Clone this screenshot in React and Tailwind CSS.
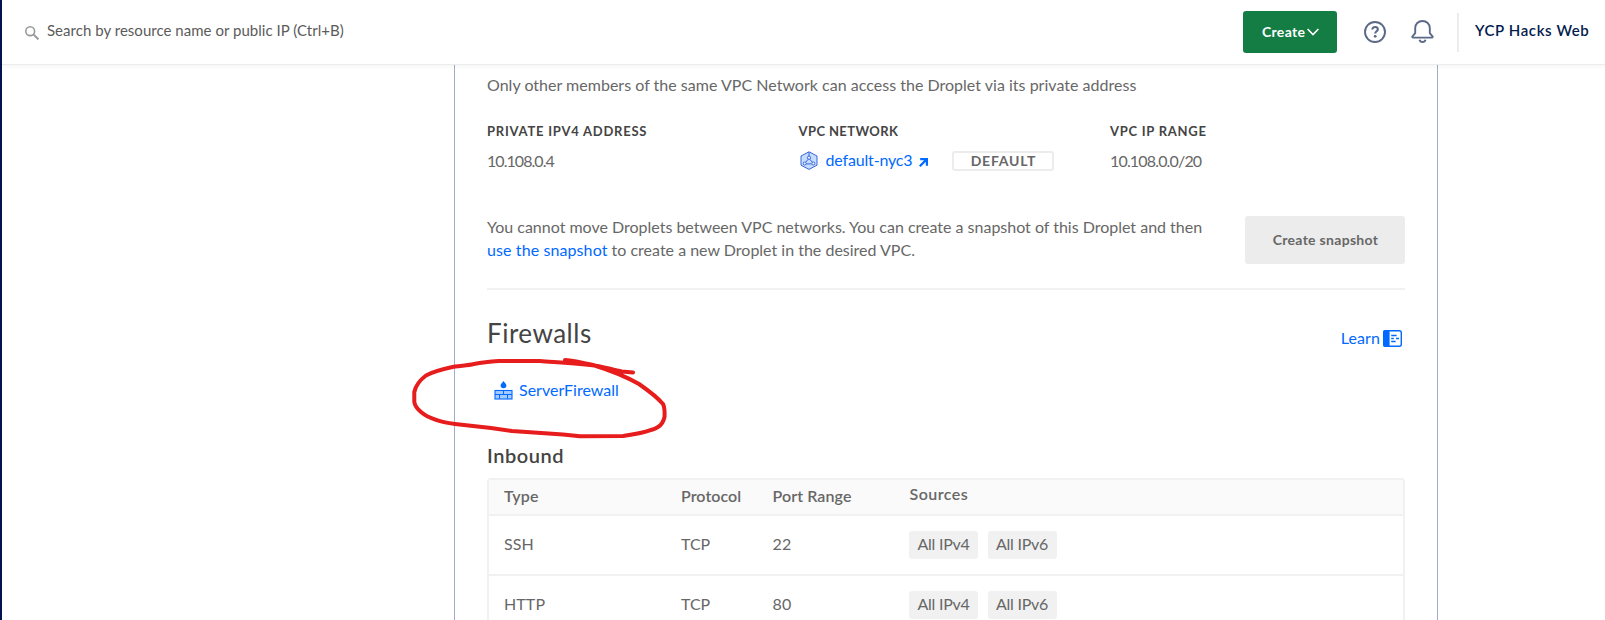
function SearchIcon() {
  return (
    <svg className="mt-px ml-[23px] size-[14px] shrink-0" viewBox="0 0 14 14" fill="none" stroke="#999999">
      <circle cx="5.2" cy="5.2" r="4.4" strokeWidth="1.6" />
      <path d="M8.4 8.4 13.4 13.4" strokeWidth="2" />
    </svg>
  );
}

function HelpIcon() {
  return (
    <svg className="size-[22px]" viewBox="0 0 22 22" fill="none" stroke="#5b6987" strokeWidth="1.9">
      <circle cx="11" cy="11" r="10" />
      <path d="M8.3 8.6c0-1.6 1.1-2.6 2.8-2.6s2.7 1 2.7 2.4c0 1.9-2.6 1.9-2.6 4.1" strokeWidth="2.1" />
      <circle cx="11.2" cy="15.3" r="1.4" fill="#5b6987" stroke="none" />
    </svg>
  );
}

function BellIcon() {
  return (
    <svg className="size-[23px]" viewBox="0 0 23 23" fill="none" stroke="#5b6987" strokeWidth="1.9" strokeLinejoin="round">
      <path d="M11.5 1C7.3 1 4.2 4 4.2 8v5.2L1.5 16.3c-.5.7-.2 1.3.6 1.3h18.8c.8 0 1.1-.6.6-1.3L18.8 13.2V8c0-4-3.1-7-7.3-7Z" />
      <path d="M8.5 19.7a3.1 3 0 0 0 6 0" />
    </svg>
  );
}

function VpcIcon() {
  return (
    <svg className="h-[19px] w-[18px] shrink-0" viewBox="0 0 18 19" fill="none" stroke="#3b66d9" strokeWidth="1">
      <path d="M9 .8 17 5v9.2l-8 4.2-8-4.2V5Z" fill="#c5dcff" />
      <path d="M9 1v4M8.2 8.2 5.6 11.3M9.8 8.2l2.6 3.1M6.2 12.9h5.6" />
      <circle cx="9" cy="6.7" r="1.6" fill="#eef5ff" />
      <circle cx="4.7" cy="12.5" r="1.5" fill="#eef5ff" />
      <circle cx="13.3" cy="12.5" r="1.5" fill="#eef5ff" />
    </svg>
  );
}

function ArrowIcon() {
  return (
    <svg className="size-[9px]" viewBox="0 0 9 9" fill="none" stroke="#0069ff" strokeWidth="2.2">
      <path d="M1.2 1.1H7.9V7.8M7.6 1.4.8 8.2" />
    </svg>
  );
}

function LearnIcon() {
  return (
    <svg className="h-[17px] w-[19px]" viewBox="0 0 19 17" fill="none">
      <rect x=".7" y=".7" width="17.6" height="15.6" rx="2" fill="#fff" stroke="#0069ff" strokeWidth="1.4" />
      <path d="M2 0h4.6v17H2a2 2 0 0 1-2-2V2a2 2 0 0 1 2-2Z" fill="#0069ff" />
      <path d="M8.2 5.5h5.4M8.2 8.5h2.6M13 8.5h3M8.2 11.5h4.4" stroke="#0069ff" strokeWidth="1.3" />
    </svg>
  );
}

function FirewallIcon() {
  return (
    <svg className="h-[19px] w-[19px] shrink-0" viewBox="0 0 19 19" fill="none">
      <path d="M9.5 0C10.6 1.8 12.4 3 12.4 4.6a2.9 2.6 0 0 1-5.8 0C6.600 3 8.400 1.800 9.500 0Z" fill="#0069ff" />
      <rect x="1" y="9.5" width="17" height="8.5" fill="#a6ccff" stroke="#0069ff" strokeWidth="1.1" />
      <path d="M1 13.500h17M9.500 9.700v4M5.500 13.700v4M13.500 13.700v4" stroke="#0069ff" strokeWidth="1" />
    </svg>
  );
}

function Scribble() {
  return (
    <svg className="pointer-events-none absolute top-[350px] left-[405px] h-[96px] w-[270px]" viewBox="405 350 270 96" fill="none" stroke="#e71c1c" strokeWidth="4" strokeLinecap="round" strokeLinejoin="round">
      <path d="M565 360C572 360 582 363 593 365C606 369 625 376 639 384C649 391 658 398 663 404Q665 408 664.5 417Q663 424 658 427C650 432 636 434 623 436L580 436.3L563 434.5L512 431L491 428L455 424C440 422 428 418 421 412Q415 407 414.3 402V392C416 384 420 380 426 375.5C434 371 446 368.5 455 366.5C462 365.5 468 365.5 474 364C485 362 493 361.5 500 361H540C552 362 570 363 590 365C603 366 612 370 622 371.5L633 372.5" />
    </svg>
  );
}

const rules = [
  { type: "SSH", protocol: "TCP", port: "22" },
  { type: "HTTP", protocol: "TCP", port: "80" },
];

const columns = "grid grid-cols-[177px_91.5px_136.5px_1fr] pl-[15px]";

function Tag({ children }) {
  return <span className="h-7 rounded-[3px] bg-[#f1f1f1] px-[8.5px] leading-[26px] tracking-[-0.26px]">{children}</span>;
}

function Header() {
  return (
    <header className="relative z-10 flex h-[65px] items-center border-b border-[#ececec] bg-white shadow-[0_2px_4px_rgba(0,0,0,0.04)]">
      <SearchIcon />
      <span className="ml-2 flex-1 pb-[5px] text-[15px] leading-5 tracking-[0.03px] text-[#5b5b5b]">Search by resource name or public IP (Ctrl+B)</span>
      <button className="flex h-[42px] w-[94px] items-center rounded-[3px] bg-[#147d43] pb-px pl-[19px] text-sm font-bold tracking-[0.3px] text-white">
        Create
        <svg className="mt-px ml-[2px] h-2 w-3" viewBox="0 0 12 8" fill="none" stroke="currentColor" strokeWidth="1.6">
          <path d="M.6 1 6 6.5 11.4 1" />
        </svg>
      </button>
      <div className="ml-[27px]"><HelpIcon /></div>
      <div className="mr-px ml-[25px] pb-px"><BellIcon /></div>
      <div className="ml-[22px] h-[39px] w-[2px] bg-[#ececec]" />
      <span className="ml-4 w-[130px] pb-[5px] text-[15px] leading-5 font-semibold tracking-[0.6px] whitespace-nowrap text-[#031b4e]">YCP Hacks Web</span>
    </header>
  );
}

function Network() {
  return (
    <>
      <p className="leading-6 tracking-[0.017px]">Only other members of the same VPC Network can access the Droplet via its private address</p>
      <div className="mt-[26px] grid grid-cols-[311.5px_311.5px_1fr]">
        <div>
          <h3 className="text-[13px] leading-4 font-bold tracking-[0.76px] text-[#444]">PRIVATE IPV4 ADDRESS</h3>
          <p className="mt-[10px] leading-6 tracking-[-0.95px]">10.108.0.4</p>
        </div>
        <div>
          <h3 className="text-[13px] leading-4 font-bold tracking-[0.4px] text-[#444]">VPC NETWORK</h3>
          <div className="mt-[9px] flex h-[25px] items-center">
            <a className="ml-px flex items-center text-[#0069ff]">
              <VpcIcon />
              <span className="ml-2 pb-px leading-6 tracking-[-0.16px]">default-nyc3</span>
              <span className="mt-[3px] ml-[7px]"><ArrowIcon /></span>
            </a>
            <span className="ml-6 h-5 w-[102px] rounded-[3px] border-2 border-[#ececec] text-center text-sm leading-[15px] font-bold tracking-[0.8px]">DEFAULT</span>
          </div>
        </div>
        <div>
          <h3 className="text-[13px] leading-4 font-bold tracking-[0.73px] text-[#444]">VPC IP RANGE</h3>
          <p className="mt-[10px] leading-6 tracking-[-0.83px]">10.108.0.0/20</p>
        </div>
      </div>
      <div className="mt-[42px] flex items-end justify-between">
        <p className="mb-[3px] leading-[23px] whitespace-nowrap">
          <span className="tracking-[-0.007px]">You cannot move Droplets between VPC networks. You can create a snapshot of this Droplet and then</span>
          <br />
          <a className="tracking-[0.1px] text-[#0069ff]">use the snapshot</a> to create a new Droplet in the desired VPC.
        </p>
        <button className="mt-px h-12 w-40 rounded-[3px] bg-[#ececec] pl-px text-sm font-bold tracking-[0.3px] text-[#676767]">Create snapshot</button>
      </div>
      <hr className="mt-6 border-t-2 border-[#f1f1f1]" />
    </>
  );
}

function Firewalls() {
  return (
    <>
      <div className="mt-[27px] flex items-start justify-between">
        <h2 className="text-[26px] leading-8 tracking-[0.5px] text-[#444]">Firewalls</h2>
        <a className="mt-[9px] mr-[3px] flex items-center gap-[3px] tracking-[0.1px] text-[#0069ff]">
          <span className="pb-px leading-[23px]">Learn</span>
          <LearnIcon />
        </a>
      </div>
      <a className="mt-[28px] ml-[7px] flex h-6 items-center text-[#0069ff]">
        <FirewallIcon />
        <span className="ml-[6px] leading-6">ServerFirewall</span>
      </a>
      <h3 className="mt-[41px] text-[20px] leading-6 font-semibold tracking-[0.55px] text-[#444]">Inbound</h3>
      <div className="mt-[11px] rounded-t-[4px] border-2 border-[#f1f1f1]">
        <div className={`${columns} h-9 border-b-2 border-[#f1f1f1] bg-[#fafafa] pt-1 leading-6 font-semibold`}>
          <span className="tracking-[0.12px]">Type</span>
          <span className="tracking-[0.05px]">Protocol</span>
          <span className="tracking-[0.1px]">Port Range</span>
          <span className="-mt-[2px] pl-[0.5px] tracking-[0.45px]">Sources</span>
        </div>
        {rules.map((rule) => (
          <div key={rule.type} className={`${columns} h-[60px] border-b-2 border-[#f1f1f1] pt-[15px] leading-[26px]`}>
            <span className="tracking-[0.1px]">{rule.type}</span>
            <span>{rule.protocol}</span>
            <span className="tracking-[0.1px]">{rule.port}</span>
            <div className="flex items-start gap-[9.5px]">
              <Tag>All IPv4</Tag>
              <Tag>All IPv6</Tag>
            </div>
          </div>
        ))}
      </div>
    </>
  );
}

export default function App() {
  return (
    <div className="relative h-[620px] overflow-hidden border-l-2 border-[#001450] bg-white font-['Lato',sans-serif] text-[16px] text-[#676767]">
      <Header />
      <main className="ml-[452px] h-[600px] w-[984px] border-x border-[#a3abc9] px-8 pt-2">
        <Network />
        <Firewalls />
      </main>
      <div className="absolute top-0 -left-[2px]">
        <Scribble />
      </div>
    </div>
  );
}
